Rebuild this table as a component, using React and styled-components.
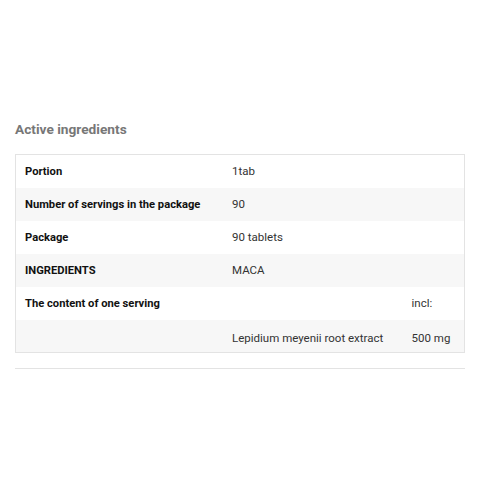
import styled, { createGlobalStyle } from "styled-components";

const Global = createGlobalStyle`
    body{
        margin: 0;
        background: #fff;
        font-family: Roboto, "Liberation Sans", sans-serif;
    }
`

const Wrap = styled.div`
    padding: 120px 15px 0 15px;
`

const Title = styled.div`
    font-size: 13.7px;
    font-weight: 700;
    color: #777;
    margin-bottom: 15px;
    line-height: 19px;
`

const Table = styled.table`
    width: 450px;
    border-collapse: collapse;
    border: 1px solid #e3e3e3;
    font-size: 11.5px;
    tr:nth-child(even){
        background: #f7f7f7;
    }
    td{
        height: 33px;
        padding: 0 9px;
        box-sizing: border-box;
        color: #333;
        vertical-align: middle;
    }
    tr:last-child td{
        padding-top: 4px;
    }
`

const Label = styled.td`
    width: 208px;
    font-weight: 700;
    font-size: 11.2px;
    && { color: #111; }
`

const Value = styled.td`
    width: ${p => p.$w}px;
`

const Rule = styled.div`
    width: 450px;
    height: 1px;
    background: #e3e3e3;
    margin-top: 15px;
`

const rows = [
    ["Portion", "1tab", ""],
    ["Number of servings in the package", "90", ""],
    ["Package", "90 tablets", ""],
    ["INGREDIENTS", "MACA", ""],
    ["The content of one serving", "", "incl:"],
    ["", "Lepidium meyenii root extract", "500 mg"],
]

export default function App(){
    return <Wrap>
        <Global/>
        <Title>Active ingredients</Title>
        <Table>
            <tbody>
                {rows.map((r, i) => <tr key={i}>
                    <Label>{r[0]}</Label>
                    <Value $w={180}>{r[1]}</Value>
                    <Value $w={62}>{r[2]}</Value>
                </tr>)}
            </tbody>
        </Table>
        <Rule/>
    </Wrap>
}
